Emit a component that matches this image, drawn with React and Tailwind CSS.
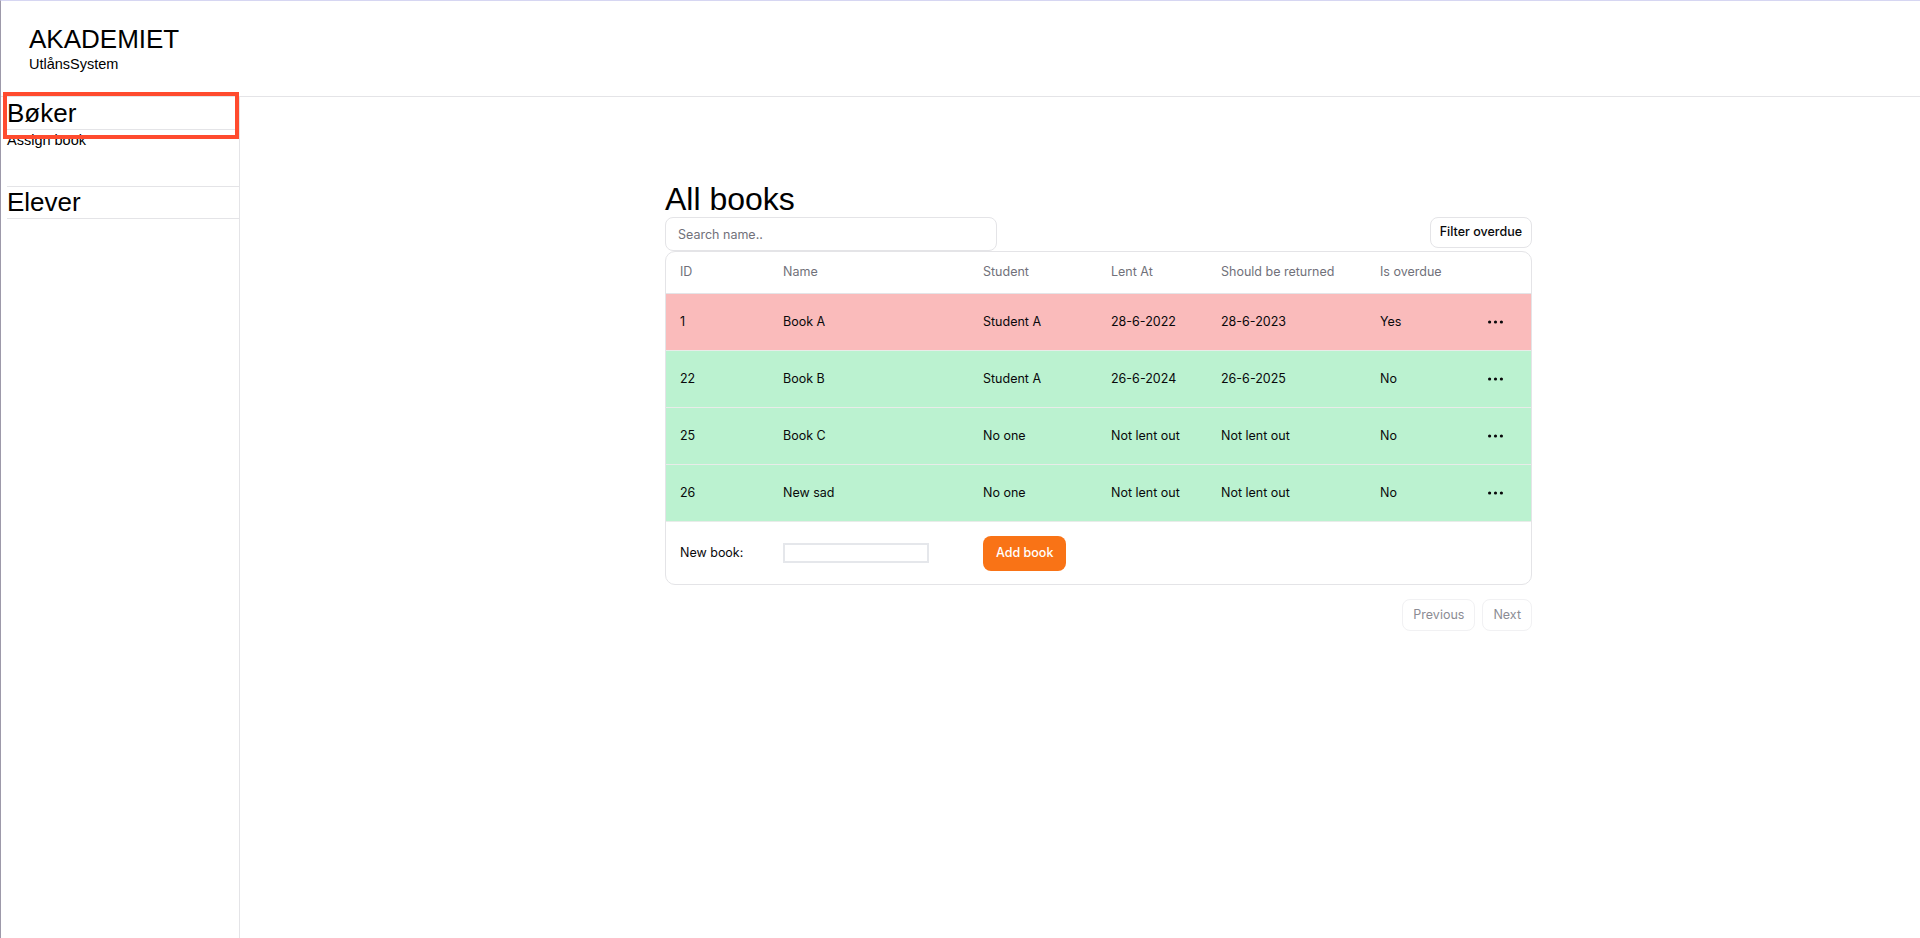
const books = [
  { id: 1, name: "Book A", student: "Student A", lentAt: "28-6-2022", due: "28-6-2023", overdue: true },
  { id: 22, name: "Book B", student: "Student A", lentAt: "26-6-2024", due: "26-6-2025", overdue: false },
  { id: 25, name: "Book C", student: "No one", lentAt: "Not lent out", due: "Not lent out", overdue: false },
  { id: 26, name: "New sad", student: "No one", lentAt: "Not lent out", due: "Not lent out", overdue: false },
];

const cols = "grid grid-cols-[101px_200px_128px_110px_159px_108px_59px]";

function Dots() {
  return (
    <svg width="15" height="4" viewBox="0 0 15 4" className="text-[#09090b]">
      <circle cx="1.6" cy="2" r="1.6" fill="currentColor" />
      <circle cx="7.5" cy="2" r="1.6" fill="currentColor" />
      <circle cx="13.4" cy="2" r="1.6" fill="currentColor" />
    </svg>
  );
}

function Sidebar() {
  return (
    <aside className="w-[239px] shrink-0 border-r border-[#e4e4e7] pl-[6px]">
      <h2 className="mt-px border-b border-[#e4e4e7] text-[26px] leading-[31px] text-black">Bøker</h2>
      <a className="block text-[14.5px] leading-5 text-black">Assign book</a>
      <h2 className="mt-[36px] border-y border-[#e4e4e7] text-[26px] leading-[31px] text-black">Elever</h2>
    </aside>
  );
}

function BooksTable() {
  return (
    <div className="w-[867px] font-['Inter',sans-serif] text-[12.5px] text-[#09090b]">
      <h1 className="font-['Liberation_Sans',Arial,sans-serif] text-[32px] leading-9 text-black">All books</h1>
      <div className="flex items-start justify-between">
        <input
          placeholder="Search name.."
          className="h-[34px] w-[332px] rounded-lg border border-[#e4e4e7] px-3 text-[12.5px] outline-none placeholder:text-[#71717a]"
        />
        <button className="h-[31px] rounded-lg border border-[#e4e4e7] bg-white px-[9px] text-[12.5px] font-medium">
          Filter overdue
        </button>
      </div>

      <div className="overflow-hidden rounded-[10px] border border-[#e4e4e7]">
        <div className={`${cols} h-[42px] items-center border-b border-[#e4e4e7] text-[#71717a]`}>
          <div className="pl-[14px]">ID</div>
          <div className="pl-4">Name</div>
          <div className="pl-4">Student</div>
          <div className="pl-4">Lent At</div>
          <div className="pl-4">Should be returned</div>
          <div className="pl-4">Is overdue</div>
          <div />
        </div>
        {books.map((b) => (
          <div
            key={b.id}
            className={`${cols} h-[57px] items-center border-b border-[#e8ece9] ${
              b.overdue ? "bg-[#fabbbb]" : "bg-[#bbf2d0]"
            }`}
          >
            <div className="pl-[14px]">{b.id}</div>
            <div className="pl-4">{b.name}</div>
            <div className="pl-4">{b.student}</div>
            <div className="pl-4">{b.lentAt}</div>
            <div className="pl-4">{b.due}</div>
            <div className="pl-4">{b.overdue ? "Yes" : "No"}</div>
            <div className="flex pl-4">
              <Dots />
            </div>
          </div>
        ))}
        <div className={`${cols} h-[62px] items-center`}>
          <div className="pl-[14px]">New book:</div>
          <div className="pl-4">
            <input className="h-5 w-[146px] border-2 border-[#e5e7eb] outline-none" />
          </div>
          <div className="pl-4">
            <button className="h-[35px] rounded-lg bg-[#f97316] px-[13px] font-medium text-white">Add book</button>
          </div>
        </div>
      </div>

      <div className="mt-[14px] flex justify-end gap-[7px]">
        <button className="h-8 rounded-lg border border-[#f1f1f3] px-[10px] text-[12.5px] text-[#8c8c94]">Previous</button>
        <button className="h-8 rounded-lg border border-[#f1f1f3] px-[10px] text-[12.5px] text-[#8c8c94]">Next</button>
      </div>
    </div>
  );
}

export default function App() {
  return (
    <div className="relative flex min-h-screen flex-col border-l border-t border-l-[#9d99aa] border-t-[#d6d6f2] bg-white font-['Liberation_Sans',Arial,sans-serif]">
      <header className="flex h-[96px] flex-col justify-center border-b border-[#e4e4e7] pl-7">
        <div className="text-[26px] leading-[30px] text-black">AKADEMIET</div>
        <div className="text-[14.5px] leading-5 text-black">UtlånsSystem</div>
      </header>

      <div className="flex flex-1">
        <Sidebar />
        <main className="flex flex-1 justify-center pl-[37px] pt-[84px]">
          <BooksTable />
        </main>
      </div>

      <div className="pointer-events-none absolute left-[2px] top-[91px] h-[47px] w-[236px] border-4 border-[#ff4b2e]" />
    </div>
  );
}
